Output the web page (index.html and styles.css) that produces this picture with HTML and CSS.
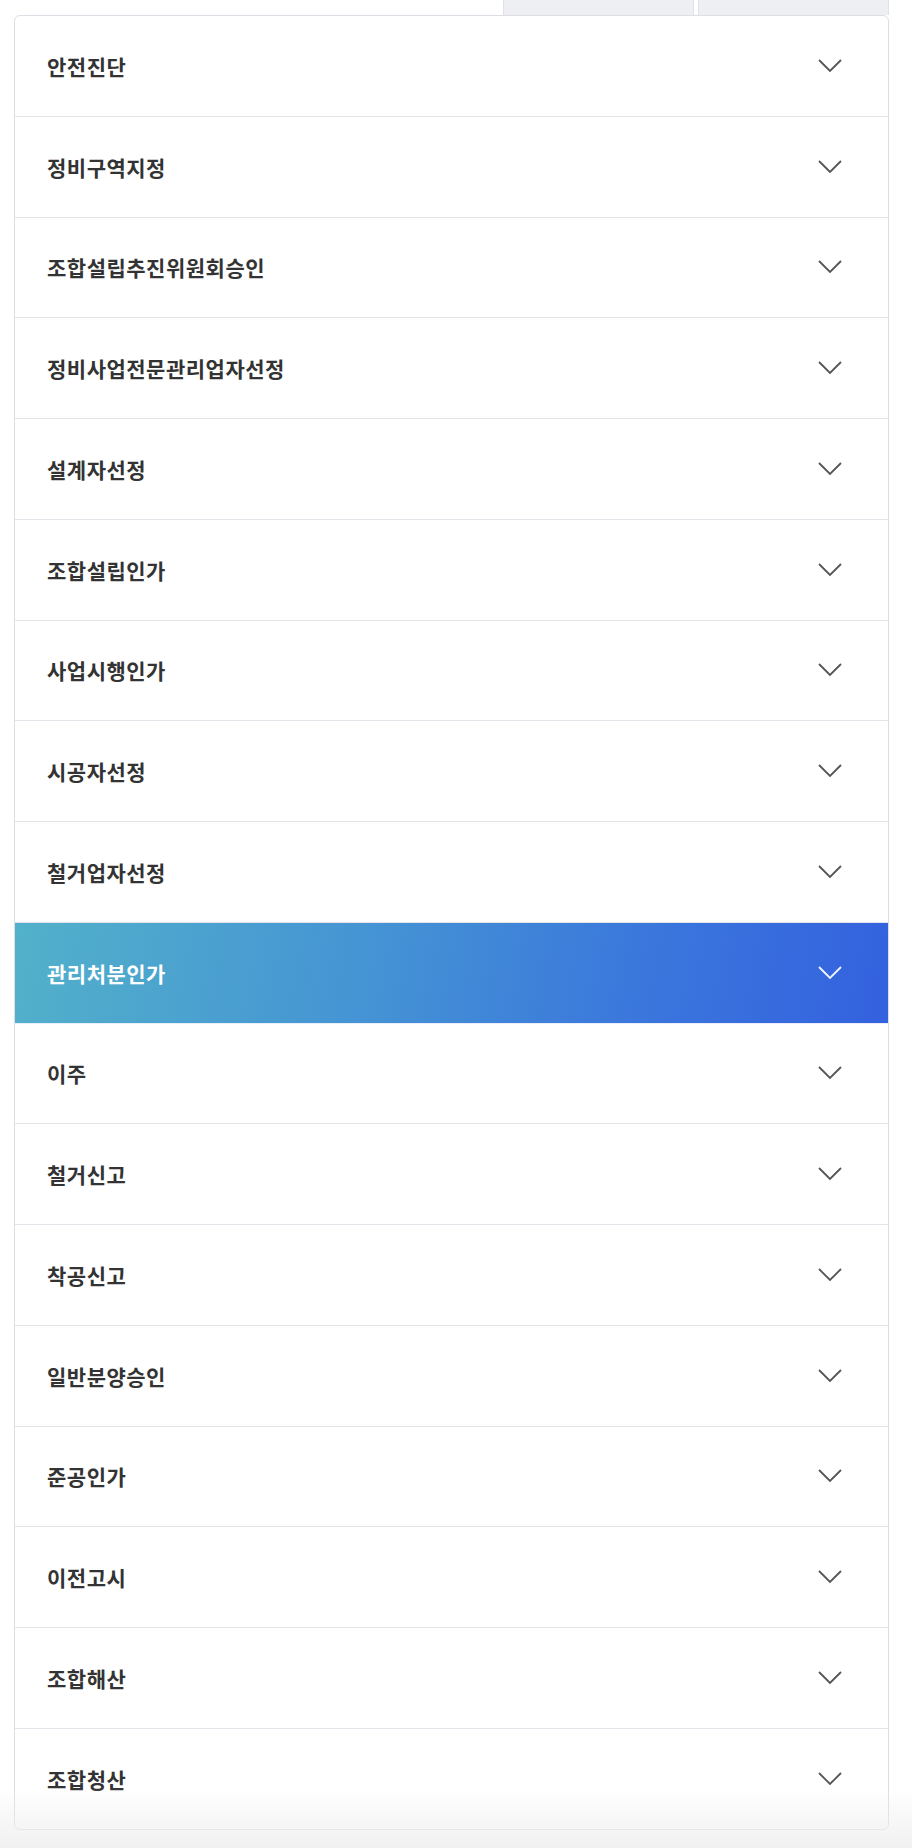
FILE: index.html
```html
<!DOCTYPE html>
<html lang="ko">
<head>
    <meta charset="UTF-8">
    <meta name="viewport" content="width=device-width, initial-scale=1.0">
    <title>정비사업 절차</title>
    <link rel="stylesheet" href="styles.css">
</head>
<body>
    <div class="page">
        <div class="tabs">
            <div class="tab"></div>
            <div class="tab"></div>
        </div>
        <div class="step-list">
            <div class="step"><span class="step-title">안전진단</span><svg class="chevron" viewBox="0 0 24 14"><path d="M1 1 L12 12 L23 1"/></svg></div>
            <div class="step"><span class="step-title">정비구역지정</span><svg class="chevron" viewBox="0 0 24 14"><path d="M1 1 L12 12 L23 1"/></svg></div>
            <div class="step"><span class="step-title">조합설립추진위원회승인</span><svg class="chevron" viewBox="0 0 24 14"><path d="M1 1 L12 12 L23 1"/></svg></div>
            <div class="step"><span class="step-title">정비사업전문관리업자선정</span><svg class="chevron" viewBox="0 0 24 14"><path d="M1 1 L12 12 L23 1"/></svg></div>
            <div class="step"><span class="step-title">설계자선정</span><svg class="chevron" viewBox="0 0 24 14"><path d="M1 1 L12 12 L23 1"/></svg></div>
            <div class="step"><span class="step-title">조합설립인가</span><svg class="chevron" viewBox="0 0 24 14"><path d="M1 1 L12 12 L23 1"/></svg></div>
            <div class="step"><span class="step-title">사업시행인가</span><svg class="chevron" viewBox="0 0 24 14"><path d="M1 1 L12 12 L23 1"/></svg></div>
            <div class="step"><span class="step-title">시공자선정</span><svg class="chevron" viewBox="0 0 24 14"><path d="M1 1 L12 12 L23 1"/></svg></div>
            <div class="step"><span class="step-title">철거업자선정</span><svg class="chevron" viewBox="0 0 24 14"><path d="M1 1 L12 12 L23 1"/></svg></div>
            <div class="step active"><span class="step-title">관리처분인가</span><svg class="chevron" viewBox="0 0 24 14"><path d="M1 1 L12 12 L23 1"/></svg></div>
            <div class="step"><span class="step-title">이주</span><svg class="chevron" viewBox="0 0 24 14"><path d="M1 1 L12 12 L23 1"/></svg></div>
            <div class="step"><span class="step-title">철거신고</span><svg class="chevron" viewBox="0 0 24 14"><path d="M1 1 L12 12 L23 1"/></svg></div>
            <div class="step"><span class="step-title">착공신고</span><svg class="chevron" viewBox="0 0 24 14"><path d="M1 1 L12 12 L23 1"/></svg></div>
            <div class="step"><span class="step-title">일반분양승인</span><svg class="chevron" viewBox="0 0 24 14"><path d="M1 1 L12 12 L23 1"/></svg></div>
            <div class="step"><span class="step-title">준공인가</span><svg class="chevron" viewBox="0 0 24 14"><path d="M1 1 L12 12 L23 1"/></svg></div>
            <div class="step"><span class="step-title">이전고시</span><svg class="chevron" viewBox="0 0 24 14"><path d="M1 1 L12 12 L23 1"/></svg></div>
            <div class="step"><span class="step-title">조합해산</span><svg class="chevron" viewBox="0 0 24 14"><path d="M1 1 L12 12 L23 1"/></svg></div>
            <div class="step"><span class="step-title">조합청산</span><svg class="chevron" viewBox="0 0 24 14"><path d="M1 1 L12 12 L23 1"/></svg></div>
        </div>
    </div>
    <div class="bottom-fade"></div>
</body>
</html>
```

FILE: styles.css
```css
body {
    margin: 0;
    background-color: #f4f4f5;
    font-family: "Noto Sans CJK KR", "Noto Sans", sans-serif;
}

.page {
    padding: 0 23px 0 14px;
    background: #fff;
    min-height: 1848px;
    box-sizing: border-box;
}

/* обрезанные вкладки над списком */
.tabs {
    display: flex;
    justify-content: flex-end;
    gap: 4px;
    height: 15px;
}

.tab {
    width: 191px;
    height: 15px;
    box-sizing: border-box;
    background-color: #eeeff3;
    border: 1px solid #e1e2e7;
    border-top: none;
    border-bottom: none;
}

.step-list {
    border: 1px solid #dedde6;
    border-radius: 6px;
    overflow: hidden;
    background: #fff;
}

.step {
    height: 99.75px;
    display: flex;
    align-items: center;
    justify-content: space-between;
    padding: 0 46px 0 32px;
    border-bottom: 1px solid #e3e3ea;
}

.step:last-child {
    border-bottom: none;
}

.step-title {
    font-size: 21px;
    font-weight: 700;
    letter-spacing: 0.5px;
    color: #333;
}

.chevron {
    width: 24px;
    height: 14px;
    fill: none;
    stroke: #555;
    stroke-width: 1.8;
}

.step.active {
    background: linear-gradient(100deg, #52b1ca 0%, #4594d4 40%, #3b78dc 70%, #3461df 100%);
    border-bottom-color: #e9eef9;
}

.step.active .step-title {
    color: #fff;
}

.step.active .chevron {
    stroke: #f1f5ff;
}

.bottom-fade {
    position: fixed;
    left: 0;
    right: 0;
    bottom: 0;
    height: 60px;
    background: linear-gradient(rgba(240, 240, 240, 0), rgba(238, 238, 238, 0.85));
    pointer-events: none;
}
```
